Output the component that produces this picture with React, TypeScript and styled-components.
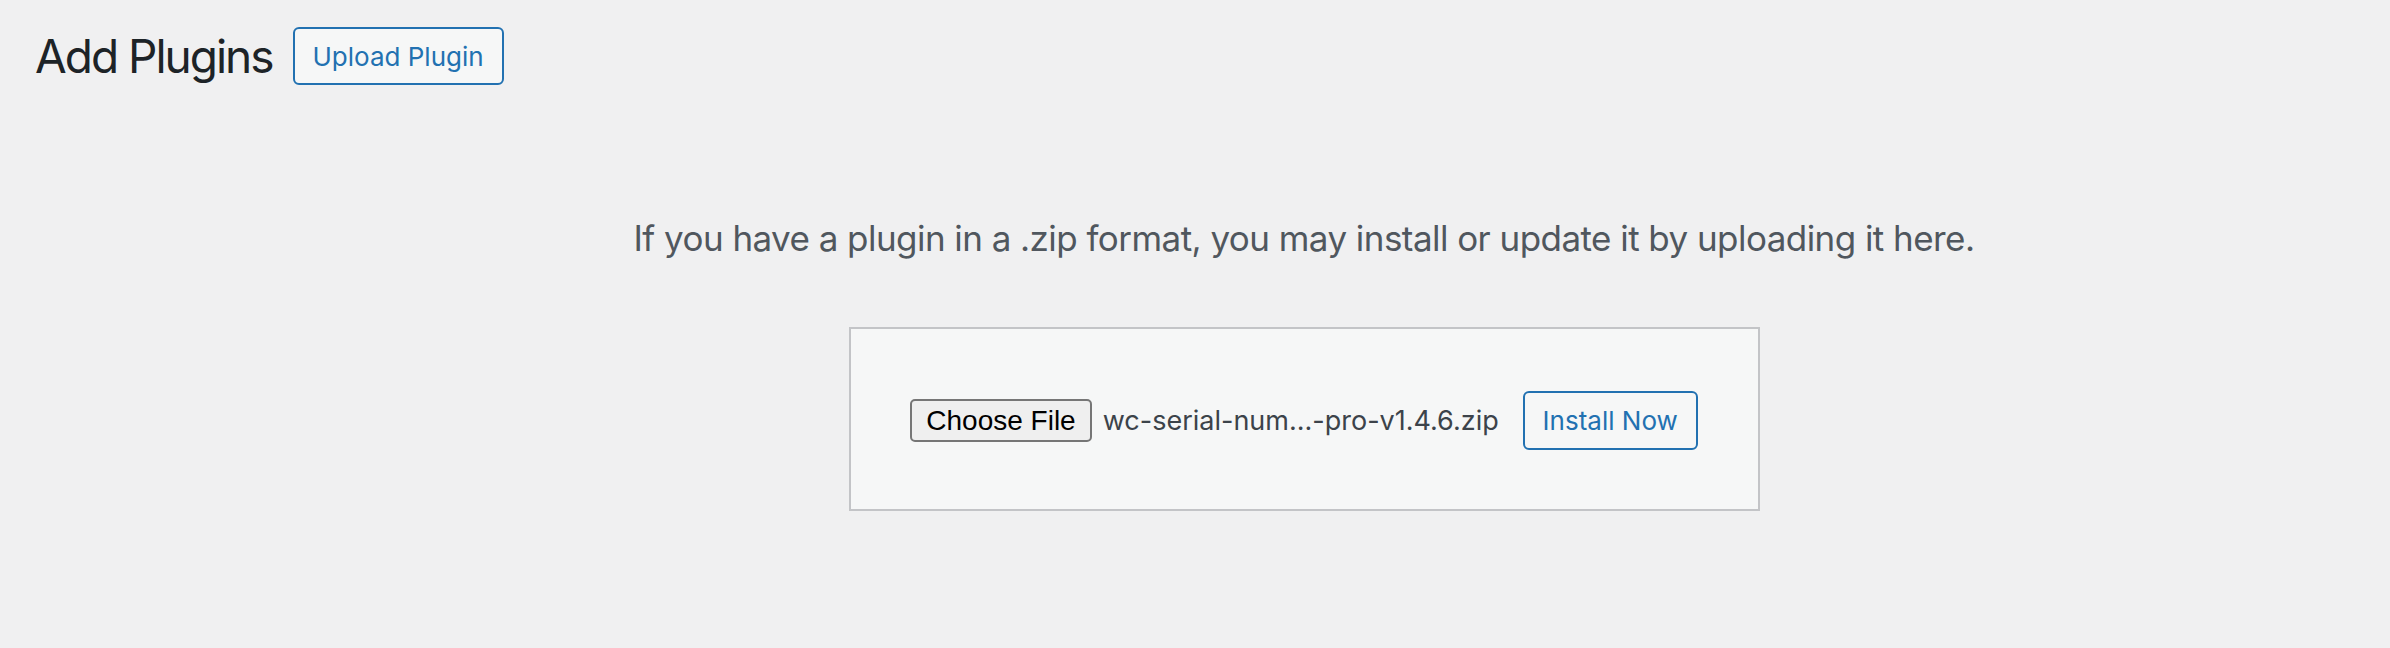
import React from "react";
import styled, { createGlobalStyle } from "styled-components";

const GlobalStyle = createGlobalStyle`
  html, body {
    margin: 0;
    padding: 0;
    background: #f0f0f1;
  }
  body {
    font-family: Inter, "Noto Sans", "Liberation Sans", sans-serif;
    color: #3c434a;
  }
`;

const Page = styled.div`
  width: 2390px;
  height: 648px;
  box-sizing: border-box;
  padding: 27px 0 0 35px;
  overflow: hidden;
`;

const TitleRow = styled.div`
  display: flex;
  align-items: center;
  gap: 20px;
`;

const Title = styled.h1`
  margin: 0;
  font-size: 46px;
  font-weight: 400;
  letter-spacing: -2px;
  line-height: 58px;
  color: #1d2327;
`;

const OutlineButton = styled.button<{ $w: number; $h: number }>`
  box-sizing: border-box;
  width: ${(p) => p.$w}px;
  height: ${(p) => p.$h}px;
  padding: 0;
  border: 2px solid #2271b1;
  border-radius: 6px;
  background: #f6f7f7;
  color: #2271b1;
  font-family: inherit;
  font-size: 26px;
  cursor: pointer;
`;

const UploadSection = styled.div`
  padding-left: 183px;
  text-align: center;
`;

const Help = styled.p`
  margin: 0;
  padding-top: 128px;
  font-size: 35px;
  letter-spacing: -0.55px;
  line-height: 50px;
  color: #50575e;
`;

const FormBox = styled.div`
  box-sizing: border-box;
  width: 911px;
  height: 184px;
  margin: 64px auto 0;
  padding-top: 3px;
  border: 2px solid #c3c4c7;
  background: #f6f7f7;
  display: flex;
  align-items: center;
  justify-content: center;
`;

const FileButton = styled.button`
  box-sizing: border-box;
  height: 43px;
  padding: 0 14px;
  border: 2px solid #767676;
  border-radius: 5px;
  background: #efefef;
  color: #000;
  font-family: "Liberation Sans", Arial, sans-serif;
  font-size: 28px;
`;

const FileName = styled.span`
  margin: 0 24px 0 11px;
  font-size: 27px;
  color: #3c434a;
  white-space: nowrap;
`;

export default function App() {
  return (
    <>
      <GlobalStyle />
      <Page>
        <TitleRow>
          <Title>Add Plugins</Title>
          <OutlineButton $w={211} $h={58}>Upload Plugin</OutlineButton>
        </TitleRow>
        <UploadSection>
          <Help>
            If you have a plugin in a .zip format, you may install or update it by uploading it here.
          </Help>
          <FormBox>
            <FileButton>Choose File</FileButton>
            <FileName>wc-serial-num...-pro-v1.4.6.zip</FileName>
            <OutlineButton $w={175} $h={59}>Install Now</OutlineButton>
          </FormBox>
        </UploadSection>
      </Page>
    </>
  );
}
